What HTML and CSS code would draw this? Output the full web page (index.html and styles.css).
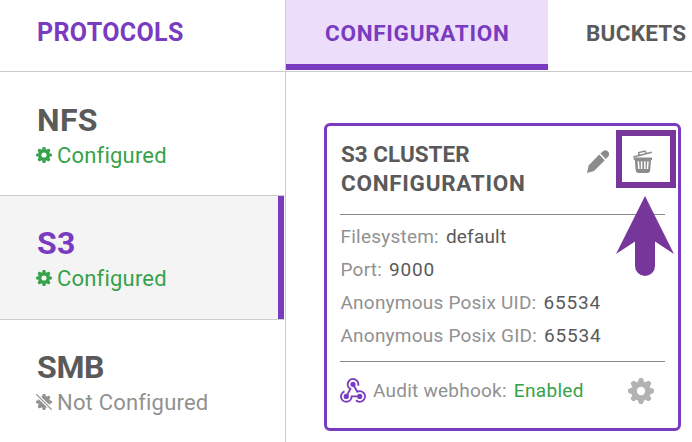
FILE: index.html
```html
<!DOCTYPE html>
<html lang="en">
<head>
<meta charset="utf-8">
<title>Protocols</title>
<link rel="stylesheet" href="styles.css">
</head>
<body>
<svg class="defs" aria-hidden="true">
  <symbol id="gear" viewBox="-13 -13 26 26">
    <circle r="6.9" fill="none" stroke="currentColor" stroke-width="5.4"/>
    <g fill="currentColor">
      <path id="tooth" d="M-3.4-8.8-2.2-12Q-1.8-13-.8-13H.8Q1.8-13 2.2-12L3.4-8.8z"/>
      <use href="#tooth" transform="rotate(45)"/><use href="#tooth" transform="rotate(90)"/>
      <use href="#tooth" transform="rotate(135)"/><use href="#tooth" transform="rotate(180)"/>
      <use href="#tooth" transform="rotate(225)"/><use href="#tooth" transform="rotate(270)"/>
      <use href="#tooth" transform="rotate(315)"/>
    </g>
  </symbol>
</svg>
<div class="app">
  <aside class="sidebar">
    <h1 class="sidebar-title">PROTOCOLS</h1>
    <div class="protocol first">
      <h2 class="name nfs">NFS</h2>
      <p class="status ok"><svg class="mini"><use href="#gear"/></svg><span>Configured</span></p>
    </div>
    <div class="protocol active">
      <h2 class="name s3">S3</h2>
      <p class="status ok"><svg class="mini"><use href="#gear"/></svg><span>Configured</span></p>
    </div>
    <div class="protocol last">
      <h2 class="name smb">SMB</h2>
      <p class="status off"><svg class="mini" viewBox="0 0 16 16">
        <defs><mask id="cut"><path fill="#fff" d="M0 0h16v16H0z"/><path stroke="#000" stroke-width="3.4" d="M-1-1 17 17"/></mask></defs>
        <g mask="url(#cut)"><use href="#gear" width="16" height="16"/><circle cx="8" cy="8" r="4" fill="currentColor"/></g>
        <path stroke="currentColor" stroke-width="1.2" d="M.3.3 15.7 15.7"/></svg><span>Not Configured</span></p>
    </div>
  </aside>
  <main class="main">
    <nav class="tabs">
      <a class="tab selected">CONFIGURATION</a>
      <a class="tab buckets">BUCKETS</a>
    </nav>
    <section class="card">
      <header class="card-head">
        <h3 class="card-title"><span class="t1">S3 CLUSTER</span><br>CONFIGURATION</h3>
        <svg class="pencil" viewBox="0 0 22 23"><path fill="currentColor" d="M0 23 1.6 15.4 12.2 4.6 17.8 10.2 7 21zM13.4 3.6 16.2 1Q18.7-.8 21 1.5 23.2 4 21.4 6.3L18.8 9z"/></svg>
        <svg class="trash" viewBox="0 0 20 23"><g fill="none" stroke="currentColor"><path stroke-width="1.5" d="M.3 7 18.8 2.2M5.8 5V2.6L12 1.1 13 3"/></g>
          <path fill="currentColor" d="M.8 7.4H19v2.7H.8zM1.8 10H18L17.2 20.6Q17 23 14.8 23H5.2Q2.9 23 2.7 20.6z"/>
          <path stroke="#fff" stroke-width="1.5" d="M5.3 11.2 5.9 19M8.6 11.2V19M11.8 11.2V19M15 11.2 14.4 19"/></svg>
        <div class="callout"></div>
        <svg class="arrow" viewBox="0 0 58 80"><path fill="#77369a" d="M29 0 58 58 39 45.5V70a10 10 0 0 1-20 0V45.5L0 58z"/></svg>
      </header>
      <dl class="facts">
        <div class="fact"><dt>Filesystem:</dt><dd>default</dd></div>
        <div class="fact"><dt class="port">Port:</dt><dd class="num">9000</dd></div>
        <div class="fact"><dt>Anonymous Posix UID:</dt><dd class="num">65534</dd></div>
        <div class="fact"><dt>Anonymous Posix GID:</dt><dd class="num">65534</dd></div>
      </dl>
      <footer class="audit">
        <svg class="hook" viewBox="0 0 26 26"><g fill="currentColor"><circle cx="13" cy="6.3" r="2.6"/><circle cx="6.3" cy="18.4" r="2.6"/><circle cx="19.7" cy="18.4" r="2.6"/></g>
          <g fill="none" stroke="currentColor" stroke-width="1.9"><path d="M13 6.3 17.3 13.7A5.3 5.3 0 1 1 16 22.2M19.7 18.4H11.6A5.3 5.3 0 1 1 4.5 13.4M6.3 18.4 10.4 10.9A5.3 5.3 0 1 1 18.1 7.8"/></g></svg>
        <span class="audit-label">Audit webhook:</span><span class="enabled">Enabled</span>
        <svg class="settings"><use href="#gear"/></svg>
      </footer>
    </section>
  </main>
</div>
</body>
</html>
```
FILE: styles.css
```css
* { box-sizing: border-box; }
body, h1, h2, h3, p, dl, dd { margin: 0; }
body { font-family: Roboto, "Liberation Sans", sans-serif; color: #5a5a5a; background: #fff; overflow: hidden; }
svg { display: block; flex: none; }
.defs { position: absolute; width: 0; height: 0; }
.app { display: flex; width: 692px; height: 442px; overflow: hidden; }

.sidebar { width: 286px; flex: none; border-right: 1px solid #ccc; }
.sidebar-title { height: 72px; padding: 19px 0 0 37px; border-bottom: 1px solid #ccc; font-size: 25px; line-height: 28px; letter-spacing: .37px; color: #793bbf; }
.protocol { height: 124px; padding: 29px 0 0 37px; border-bottom: 1px solid #ccc; }
.protocol.first { padding-top: 30px; }
.protocol.active { width: 284px; background: linear-gradient(#793bbf, #793bbf) right / 6px 100% no-repeat border-box #f4f4f4; }
.protocol.last { border-bottom: 0; }
.name { font-size: 32px; line-height: 36px; }
.nfs { letter-spacing: .3px; }
.s3 { color: #793bbf; letter-spacing: .3px; }
.smb { letter-spacing: -.3px; }
.status { display: flex; align-items: center; gap: 5px; height: 36px; margin-left: -1px; font-size: 22px; line-height: 36px; }
.mini { width: 16px; height: 16px; margin-top: -2px; }
.ok { color: #35a24a; letter-spacing: .2px; }
.off { color: #919191; letter-spacing: .19px; }

.main { flex: none; width: 406px; }
.tabs { display: flex; height: 72px; border-bottom: 1px solid #ccc; }
.tab { height: 70px; font-size: 22.5px; line-height: 26px; font-weight: 700; padding-top: 20px; }
.selected { width: 262px; padding-left: 39px; background: #ecdefa; border-bottom: 6px solid #793bbf; color: #793bbf; letter-spacing: .71px; }
.buckets { padding-left: 38px; letter-spacing: .25px; }

.card { width: 357px; height: 308px; margin: 51px 0 0 38px; padding: 14px 13px 0; border: 3px solid #793bbf; border-radius: 6px; }
.card-head { position: relative; display: flex; height: 75px; border-bottom: 1px solid #888; color: #8c8c8c; }
.card-title { width: 247px; flex: none; padding-left: 1px; font-size: 22.5px; line-height: 29px; color: #5a5a5a; letter-spacing: .71px; }
.t1 { letter-spacing: 0; }
.pencil { width: 22px; height: 23px; margin-top: 10px; }
.trash { width: 20px; height: 23px; margin: 10px 0 0 24px; }
.callout { position: absolute; left: 276px; top: -10px; width: 60px; height: 58px; border: 6px solid #77369a; }
.arrow { position: absolute; left: 276px; top: 56px; width: 58px; height: 80px; }
.facts { padding: 5px 0 0 .5px; height: 146px; font-size: 19px; }
.fact { display: flex; gap: 7px; height: 33px; line-height: 33px; }
.fact dt { color: #919191; letter-spacing: .22px; }
.fact dd { letter-spacing: .2px; }
.fact .num { letter-spacing: .82px; }
.audit { display: flex; align-items: center; height: 58px; border-top: 1px solid #888; font-size: 19px; color: #919191; }
.hook { width: 26px; height: 26px; margin-right: 7px; color: #793bbf; }
.audit-label { letter-spacing: .24px; margin-right: 7px; }
.enabled { color: #35a24a; letter-spacing: .33px; }
.settings { width: 26px; height: 26px; margin: 0 11px 0 auto; color: #b2b2b2; }
```
